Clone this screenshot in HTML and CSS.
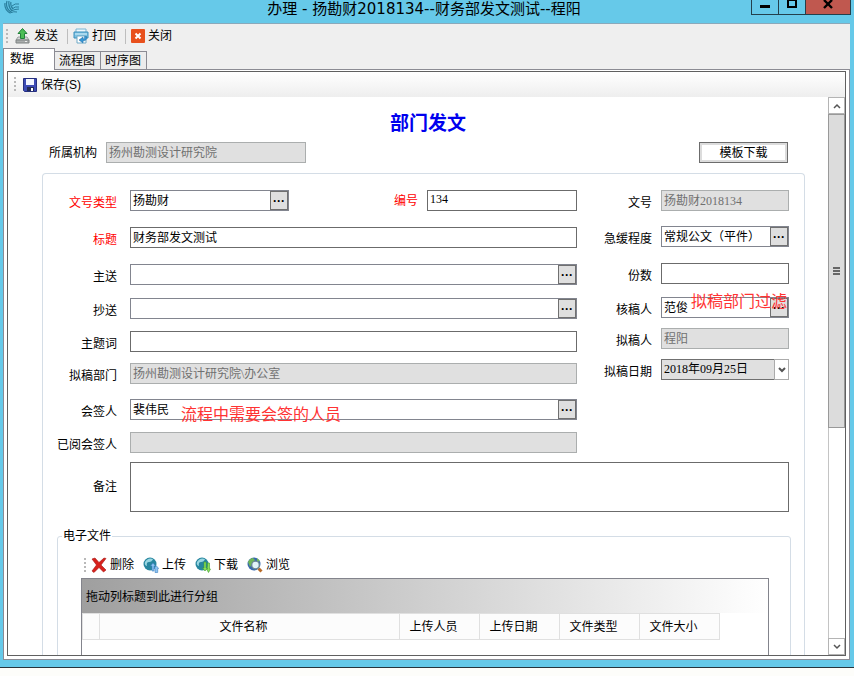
FILE: index.html
```
<!DOCTYPE html>
<html lang="zh-CN">
<head>
    <meta charset="UTF-8">
    <meta name="viewport" content="width=device-width, initial-scale=1.0">
    <title>办理 - 部门发文</title>
    <link rel="stylesheet" href="styles.css">
</head>
<body>

<div class="window">
    <header class="titlebar">
        <svg class="app-logo" width="16" height="16" viewBox="0 0 16 16" fill="none" stroke="#2a7f9e">
            <path d="M1 3Q0 9 6 13M3 1Q1 8 7 12M5 1Q4 7 8 11M7 2Q6 6 9 9" stroke-width="1.2"/>
            <path d="M8 6Q11 3 15 4M8 9Q11 6 15 7M7 11Q11 9 15 9M6 13Q10 11 13 12"/>
        </svg>
        <h1>办理 - 扬勘财2018134--财务部发文测试--程阳</h1>
        <div class="window-controls">
            <button type="button" class="win-min" aria-label="最小化">
                <svg width="10" height="10" viewBox="0 0 10 10"><path d="M0 5h10v3H0z"/></svg>
            </button>
            <button type="button" class="win-max" aria-label="最大化">
                <svg width="10" height="10" viewBox="0 0 10 10" fill="none" stroke="#000" stroke-width="2"><path d="M1 0h8v7H1z"/></svg>
            </button>
            <button type="button" class="win-close" aria-label="关闭窗口">
                <svg width="10" height="10" viewBox="0 0 10 10" stroke="#000" stroke-width="2.4"><path d="M1 0l8 8M9 0l-8 8"/></svg>
            </button>
        </div>
    </header>

    <div class="client">
        <div class="toolbar main-toolbar">
            <span class="grip"></span>
            <button type="button">
                <svg width="16" height="16" viewBox="0 0 16 16">
                    <path d="M3 9h9l2 3H1z" fill="#d5d8d8" stroke="#9a9e9e"/>
                    <path d="M1 12h13v3H1z" fill="#a9adad" stroke="#7f8383"/>
                    <path d="M10 13.5h2" stroke="#eee"/>
                    <path d="M7.500 0.500l4.500 5H9.500v5h-4v-5H3z" fill="#4bbd55" stroke="#22813a"/>
                </svg>
                发送
            </button>
            <span class="separator"></span>
            <button type="button">
                <svg width="16" height="16" viewBox="0 0 16 16">
                    <path d="M3 1h10v4H3z" fill="#eef8fd" stroke="#79b4d2"/>
                    <path d="M1 4h14v6H1z" fill="#7dc1e2" stroke="#3a8fbb"/>
                    <path d="M2 6h12" stroke="#d8f1fb"/>
                    <path d="M4 8h9v7H4z" fill="#fff" stroke="#6fa9c6"/>
                    <path d="M13.500 8.500q1 4-3.500 4.500v2l-4-3 4-3v2q2 0 1.500-2.500z" fill="#3695d4" stroke="#1e6fa6" stroke-width=".5"/>
                </svg>
                打回
            </button>
            <span class="separator"></span>
            <button type="button">
                <svg width="14" height="14" viewBox="0 0 14 14">
                    <rect width="14" height="14" rx="1" fill="#e8501c"/>
                    <path d="M4.500 4.500l5 5M9.500 4.500l-5 5" stroke="#fff" stroke-width="2"/>
                </svg>
                关闭
            </button>
        </div>

        <nav class="tabs">
            <button type="button" class="tab active">数据</button>
            <button type="button" class="tab">流程图</button>
            <button type="button" class="tab">时序图</button>
        </nav>

        <main class="tab-page">
            <div class="page-frame">
                <div class="toolbar save-toolbar">
                    <span class="grip"></span>
                    <button type="button">
                        <svg width="14" height="14" viewBox="0 0 14 14">
                            <path d="M.5 .5h13v13h-12l-1-1z" fill="#3d4bb5" stroke="#26307f"/>
                            <path d="M3 1h8v6H3z" fill="#f3f6ff"/>
                            <path d="M4 9h7v4H4z" fill="#222a55"/>
                            <path d="M8 10h2v3H8z" fill="#fff"/>
                        </svg>
                        保存(S)
                    </button>
                </div>

                <div class="scroll-view">
                    <form class="doc">
                        <h2>部门发文</h2>

                        <div class="org-row">
                            <label for="org">所属机构</label>
                            <input class="field" id="org" type="text" value="扬州勘测设计研究院" disabled>
                            <button type="button" class="template-btn">模板下载</button>
                        </div>

                        <div class="group">
                            <div class="columns">
                                <div class="rows rows-left">
                                    <div class="row">
                                        <label class="required" for="docType">文号类型</label>
                                        <div class="split">
                                            <div class="combo combo-type">
                                                <input id="docType" type="text" value="扬勘财">
                                                <button type="button" aria-label="选择文号类型">···</button>
                                            </div>
                                            <div class="number">
                                                <label class="required" for="docNo">编号</label>
                                                <input class="field" id="docNo" type="text" value="134">
                                            </div>
                                        </div>
                                    </div>
                                    <div class="row">
                                        <label class="required" for="subject">标题</label>
                                        <input class="field" id="subject" type="text" value="财务部发文测试">
                                    </div>
                                    <div class="row">
                                        <label for="sendTo">主送</label>
                                        <div class="combo">
                                            <input id="sendTo" type="text">
                                            <button type="button" aria-label="选择主送">···</button>
                                        </div>
                                    </div>
                                    <div class="row">
                                        <label for="copyTo">抄送</label>
                                        <div class="combo">
                                            <input id="copyTo" type="text">
                                            <button type="button" aria-label="选择抄送">···</button>
                                        </div>
                                    </div>
                                    <div class="row">
                                        <label for="keywords">主题词</label>
                                        <input class="field" id="keywords" type="text">
                                    </div>
                                    <div class="row">
                                        <label for="dept">拟稿部门</label>
                                        <input class="field" id="dept" type="text" value="扬州勘测设计研究院\办公室" disabled>
                                    </div>
                                    <div class="row">
                                        <label for="signer">会签人</label>
                                        <div class="combo">
                                            <input id="signer" type="text" value="裴伟民">
                                            <button type="button" aria-label="选择会签人">···</button>
                                            <span class="note note-signer">流程中需要会签的人员</span>
                                        </div>
                                    </div>
                                    <div class="row">
                                        <label for="signed">已阅会签人</label>
                                        <input class="field" id="signed" type="text" disabled>
                                    </div>
                                </div>

                                <div class="rows rows-right">
                                    <div class="row">
                                        <label for="docCode">文号</label>
                                        <input class="field" id="docCode" type="text" value="扬勘财2018134" disabled>
                                    </div>
                                    <div class="row">
                                        <label for="urgency">急缓程度</label>
                                        <div class="combo">
                                            <input id="urgency" type="text" value="常规公文（平件）">
                                            <button type="button" aria-label="选择急缓程度">···</button>
                                        </div>
                                    </div>
                                    <div class="row">
                                        <label for="copies">份数</label>
                                        <input class="field" id="copies" type="text">
                                    </div>
                                    <div class="row">
                                        <label for="checker">核稿人</label>
                                        <div class="combo">
                                            <input id="checker" type="text" value="范俊">
                                            <button type="button" aria-label="选择核稿人">···</button>
                                            <span class="note note-checker">拟稿部门过滤</span>
                                        </div>
                                    </div>
                                    <div class="row">
                                        <label for="drafter">拟稿人</label>
                                        <input class="field" id="drafter" type="text" value="程阳" disabled>
                                    </div>
                                    <div class="row">
                                        <label for="draftDate">拟稿日期</label>
                                        <div class="combo date">
                                            <input id="draftDate" type="text" value="2018年09月25日">
                                            <button type="button" aria-label="选择日期">
                                                <svg width="8" height="6" viewBox="0 0 8 6" fill="none" stroke="#555" stroke-width="2"><path d="M1 1l3 3 3-3"/></svg>
                                            </button>
                                        </div>
                                    </div>
                                </div>
                            </div>

                            <div class="row remark-row">
                                <label for="remark">备注</label>
                                <textarea class="field" id="remark"></textarea>
                            </div>

                            <fieldset class="files">
                                <legend>电子文件</legend>
                                <div class="files-body">
                                    <div class="toolbar file-toolbar">
                                        <span class="grip"></span>
                                        <button type="button">
                                            <svg width="16" height="16" viewBox="0 0 16 16">
                                                <path d="M1 2l3-1 4 4.500L13 1l2 .5L10 8l5 5-2.500 2L8 10.500 3 15.500 1 14l4.500-6z" fill="#d8211c" stroke="#a31512" stroke-width=".6"/>
                                            </svg>
                                            删除
                                        </button>
                                        <button type="button">
                                            <svg width="16" height="16" viewBox="0 0 16 16">
                                                <circle cx="7" cy="7" r="6.500" fill="#27869f"/>
                                                <path d="M2 5q3-5 8-3-1 3-4 3T4 9Q1 8 2 5z" fill="#9ad7e2"/>
                                                <path d="M9 14V9H7.500L10 6l2.500 3H11v5zM12 15.500v-4h-1.200L13.500 9l2.200 2.500h-1v4z" fill="#8fc4f2" stroke="#3c7fc0" stroke-width=".6"/>
                                            </svg>
                                            上传
                                        </button>
                                        <button type="button">
                                            <svg width="16" height="16" viewBox="0 0 16 16">
                                                <circle cx="7" cy="7" r="6.500" fill="#27869f"/>
                                                <path d="M2 5q3-5 8-3-1 3-4 3T4 9Q1 8 2 5z" fill="#9ad7e2"/>
                                                <path d="M9 5v6H7.500l2.500 3 2.500-3H11V5zM12.500 6v6h-1l2 3.500 2-3.500h-1V6z" fill="#8be05a" stroke="#3c9c2c" stroke-width=".6"/>
                                            </svg>
                                            下载
                                        </button>
                                        <button type="button">
                                            <svg width="16" height="16" viewBox="0 0 16 16">
                                                <circle cx="7" cy="7" r="6.500" fill="#3868ae"/>
                                                <path d="M1 5q2-4 5-4l2 2-3 4-2 3zM10 1l3 3-3 1z" fill="#6fb658"/>
                                                <path d="M11.500 11.500l3 3" stroke="#b86b28" stroke-width="3"/>
                                                <circle cx="8.500" cy="8" r="3.800" fill="#e3f3f8" stroke="#6c8793" stroke-width="1.300"/>
                                            </svg>
                                            浏览
                                        </button>
                                    </div>
                                    <div class="grid">
                                        <div class="group-panel">拖动列标题到此进行分组</div>
                                        <table>
                                            <thead>
                                                <tr>
                                                    <th class="col-marker"></th>
                                                    <th class="col-name">文件名称</th>
                                                    <th>上传人员</th>
                                                    <th>上传日期</th>
                                                    <th>文件类型</th>
                                                    <th>文件大小</th>
                                                </tr>
                                            </thead>
                                        </table>
                                    </div>
                                </div>
                            </fieldset>
                        </div>
                    </form>

                    <div class="scrollbar">
                        <button type="button" aria-label="向上滚动">
                            <svg width="8" height="6" viewBox="0 0 8 6" fill="none" stroke="#555" stroke-width="1.500"><path d="M1 5l3-3 3 3"/></svg>
                        </button>
                        <div class="track"><div class="thumb"></div></div>
                        <button type="button" aria-label="向下滚动">
                            <svg width="8" height="6" viewBox="0 0 8 6" fill="none" stroke="#555" stroke-width="1.500"><path d="M1 1l3 3 3-3"/></svg>
                        </button>
                    </div>
                </div>
            </div>
        </main>
    </div>
</div>

</body>
</html>
```
FILE: styles.css
```
* {
    box-sizing: border-box;
}
body {
    margin: 0;
    height: 100vh;
    background: #fdfdfa;
    color: #000;
    font-family: "Liberation Sans", "Noto Sans CJK SC", sans-serif;
    font-size: 12px;
    line-height: 16px;
    overflow: hidden;
}
button, input, textarea {
    font: inherit;
    color: inherit;
    margin: 0;
    border-radius: 0;
}
button {
    padding: 0;
    border: none;
    background: none;
}
svg {
    display: block;
    flex: none;
}

/* window */
.window {
    display: flex;
    flex-direction: column;
    height: calc(100vh - 8px);
    background: #66c9e9;
    border-bottom: 1px solid #28343c;
}
.titlebar {
    display: grid;
    grid-template-columns: 97px 1fr 103px;
    align-items: start;
    height: 23px;
}
.app-logo {
    margin-left: 4px;
}
.titlebar h1 {
    margin: 0;
    font-family: "DejaVu Sans", "Noto Sans CJK SC", sans-serif;
    font-size: 15px;
    font-weight: normal;
    line-height: 18px;
    text-align: center;
    white-space: nowrap;
}
.window-controls {
    display: flex;
    height: 15px;
    margin-right: 3px;
    border: 1px solid #24404c;
    border-top: none;
}
.window-controls button {
    display: flex;
    justify-content: center;
    width: 27px;
    border-right: 1px solid #24404c;
}
.window-controls .win-close {
    flex: 1;
    border-right: none;
    background: #c0584f;
}
.client {
    flex: 1;
    display: flex;
    flex-direction: column;
    min-height: 0;
    margin: 0 4px 7px 3px;
    background: #efefef;
    border-top: 1px solid #8aa9bb;
}

/* toolbars */
.toolbar {
    display: flex;
    align-items: center;
}
.toolbar button {
    display: flex;
    align-items: center;
    gap: 3px;
}
.grip {
    width: 2px;
    height: 15px;
    background: repeating-linear-gradient(#b9b9b9 0 2px, transparent 2px 4px);
}
.separator {
    width: 1px;
    height: 15px;
    background: #bdbdbd;
}
.main-toolbar {
    gap: 7px;
    height: 24px;
    padding-left: 3px;
}
.main-toolbar .separator {
    margin-left: 2px;
    margin-right: -2px;
}
.save-toolbar {
    gap: 7px;
    height: 25px;
    padding-left: 6px;
    background: linear-gradient(#fff, #eee);
}
.save-toolbar button {
    gap: 4px;
}
.file-toolbar {
    gap: 9px;
    height: 24px;
    padding-left: 3px;
}
.file-toolbar .grip {
    margin-right: -4px;
}

/* tabs */
.tabs {
    display: flex;
    align-items: flex-end;
    height: 21px;
}
.tab {
    height: 18px;
    padding: 0 5px 0 4px;
    border: 1px solid #8b8b93;
    border-left: none;
    border-bottom: none;
    background: #ececec;
}
.tab.active {
    z-index: 1;
    height: 22px;
    width: 52px;
    margin-bottom: -1px;
    padding: 0 20px 2px 6px;
    border-left: 1px solid #8b8b93;
    background: #fff;
    white-space: nowrap;
}
.tab-page {
    flex: 1;
    display: flex;
    min-height: 0;
    padding: 1px 3px 3px;
    border: 1px solid #8b8b93;
    background: #fff;
}
.page-frame {
    flex: 1;
    display: flex;
    flex-direction: column;
    min-width: 0;
    border: 1px solid #606060;
}
.scroll-view {
    flex: 1;
    display: flex;
    min-height: 0;
    overflow: hidden;
}

/* document form */
.doc {
    flex: 1;
    min-width: 0;
    padding: 13px 23px 0 34px;
}
.doc h2 {
    margin: 0 0 5px;
    padding-left: 9px;
    color: #0000ee;
    font-size: 19px;
    line-height: 27px;
    text-align: center;
}
.org-row {
    display: flex;
    align-items: center;
    height: 21px;
    padding: 0 17px 0 7px;
    gap: 9px;
}
.org-row .field {
    width: 200px;
}
.template-btn {
    width: 89px;
    height: 21px;
    margin-left: auto;
    border: 1px solid #6c6c6c;
    box-shadow: inset 0 0 0 2px #dcdcdc;
    background: #fff;
}
.group {
    margin-top: 10px;
    padding-top: 16px;
    border: 1px solid #d4dde6;
    border-bottom: none;
    border-radius: 4px 4px 0 0;
}
.columns {
    display: flex;
    gap: 18px;
    padding-right: 15px;
}
.rows {
    display: grid;
    grid-template-columns: minmax(0, 1fr);
    align-items: start;
    align-content: start;
}
.rows-left {
    flex: 1;
    grid-template-rows: 37px 37px 34px 33px 32px 36px 33px 30px;
}
.rows-right {
    width: 194px;
    grid-template-rows: 36px 37px 34px 31px 31px 31px;
}
.row {
    display: grid;
    grid-template-columns: 74px minmax(0, 1fr);
    column-gap: 13px;
    align-items: center;
}
.rows-right .row {
    grid-template-columns: 57px minmax(0, 1fr);
    column-gap: 9px;
}
.row label {
    padding-top: 4px;
    text-align: right;
    white-space: nowrap;
}
.required {
    color: #f00;
}
.field {
    width: 100%;
    height: 21px;
    padding: 0 2px 2px;
    border: 1px solid #6b6b6b;
    background: #fff;
    font-family: "Liberation Serif", "Noto Sans CJK SC", serif;
    line-height: 16px;
    outline: none;
}
.field:disabled {
    border-color: #abaeae;
    background: #e0e0e0;
    color: #707070;
}
.split, .number {
    display: flex;
    align-items: center;
    justify-content: space-between;
    gap: 9px;
}
.number .field {
    width: 150px;
}
.row .number label {
    padding: 0;
}
.combo {
    position: relative;
    display: flex;
    height: 21px;
    border: 1px solid #82858f;
    background: #fff;
}
.combo-type {
    width: 159px;
}
.combo input {
    flex: 1;
    min-width: 0;
    padding: 0 2px;
    border: none;
    background: none;
    font-family: "Liberation Serif", "Noto Sans CJK SC", serif;
    outline: none;
}
.combo button {
    flex: none;
    width: 18px;
    border: 1px solid #707070;
    background: #dfdfdf;
    font-weight: bold;
    line-height: 14px;
}
.combo.date {
    border-color: #707070;
    background: #e0e0e0;
}
.combo.date input {
    padding-bottom: 2px;
}
.combo.date button {
    display: flex;
    align-items: center;
    justify-content: center;
    width: 15px;
    margin: -1px;
    border-color: #ababab;
    background: #fff;
}
/* red remarks laid over the fields */
.note {
    position: absolute;
    color: #f33;
    font-size: 16px;
    line-height: 20px;
    white-space: nowrap;
}
.note-signer {
    left: 50px;
    top: 5px;
}
.note-checker {
    right: 1px;
    top: -6px;
}
.remark-row {
    padding-right: 15px;
}
.remark-row label {
    padding: 0;
}
textarea.field {
    display: block;
    height: 50px;
    resize: none;
}

/* attachments */
.files {
    min-width: 0;
    margin: 16px 13px 0 14px;
    padding: 0;
    border: 1px solid #d4dde6;
    border-radius: 3px;
}
.files legend {
    margin-left: 4px;
    padding: 0 1px;
}
.files-body {
    padding: 9px 21px 20px 23px;
}
.grid {
    min-height: 160px;
    margin-top: 1px;
    border: 1px solid #83848c;
}
.group-panel {
    height: 34px;
    padding-left: 4px;
    background: linear-gradient(90deg, #9f9f9f, #fff);
    line-height: 36px;
}
.grid table {
    table-layout: fixed;
    width: 637px;
    border-collapse: collapse;
}
.grid th {
    width: 80px;
    height: 26px;
    padding: 0 12px 0 0;
    border: 1px solid #e0e0e0;
    background: #fcfcfc;
    font-weight: normal;
}
.grid .col-marker {
    width: 17px;
    padding: 0;
}
.grid .col-name {
    width: 300px;
}

/* scrollbar */
.scrollbar {
    display: flex;
    flex-direction: column;
    width: 17px;
}
.scrollbar button {
    display: flex;
    align-items: center;
    justify-content: center;
    height: 17px;
    border: 1px solid #b4b4b4;
    background: #fff;
}
.track {
    flex: 1;
    border-left: 1px solid #c4c4c4;
}
.thumb {
    display: flex;
    align-items: center;
    justify-content: center;
    height: 60%;
    margin-left: -1px;
    border: 1px solid #999;
    background: #dcdcdc;
}
.thumb::before {
    content: "";
    width: 7px;
    height: 8px;
    background: repeating-linear-gradient(#666 0 2px, transparent 2px 3px);
}
```
